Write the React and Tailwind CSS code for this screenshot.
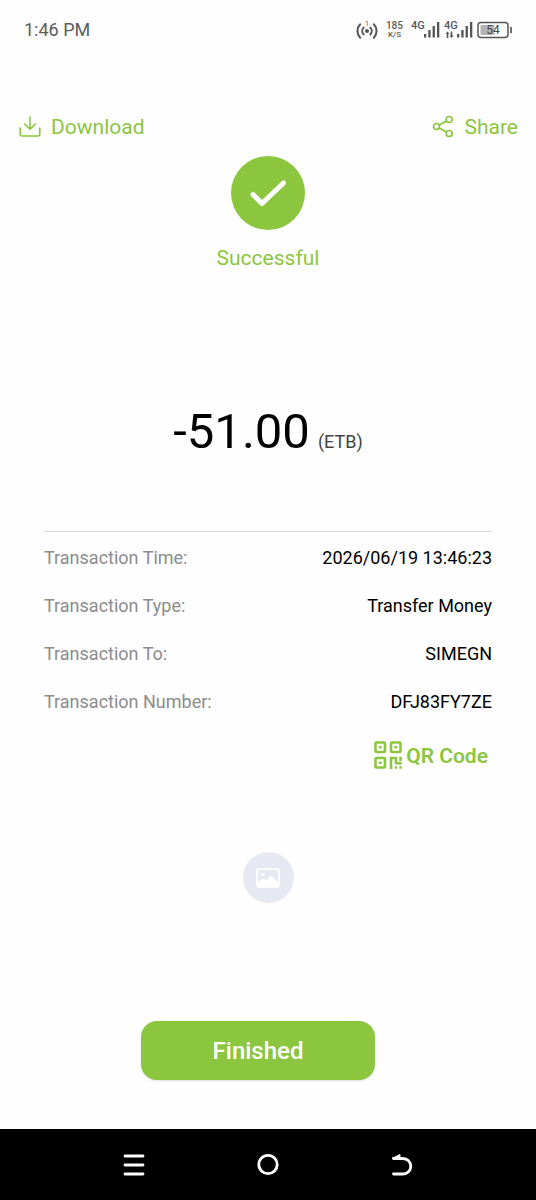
import React from 'react';

const details = [
  { label: 'Transaction Time:', value: '2026/06/19 13:46:23' },
  { label: 'Transaction Type:', value: 'Transfer Money' },
  { label: 'Transaction To:', value: 'SIMEGN' },
  { label: 'Transaction Number:', value: 'DFJ83FY7ZE' },
];

function HotspotIcon() {
  return (
    <svg width="22" height="20" viewBox="0 0 22 20" fill="none" stroke="#555" strokeWidth="2" strokeLinecap="round">
      <circle cx="11" cy="11" r="2" fill="#555" stroke="none" />
      <path d="M7.600 7.600a5 5 0 0 0 0 6.800M14.400 7.600a5 5 0 0 1 0 6.800" />
      <path d="M4.200 4.300a9.500 9.500 0 0 0 0 13.400M17.800 4.300a9.500 9.500 0 0 1 0 13.400" />
      <text x="11" y="6" fontSize="7" textAnchor="middle" fill="#555" stroke="none">1</text>
    </svg>
  );
}

function SignalIcon({ arrows = false }) {
  return (
    <svg width="29" height="20" viewBox="0 0 29 20" fill="#555">
      <text x="0" y="9" fontSize="11" fontWeight="500">4G</text>
      <path d="M13 14h2.300v3.500H13zM17.300 10h2.300v7.500h-2.300zM21.600 6h2.300v11.500h-2.300zM26 2h2.300v15.500H26z" />
      {arrows && (
        <path d="M2.700 18v-4H1.500l2-2.500 2 2.500H4.300v4zM6.700 11.500v4H5.500l2 2.500 2-2.500H8.300v-4z" />
      )}
    </svg>
  );
}

function BatteryIcon() {
  return (
    <svg width="35" height="18" viewBox="0 0 35 18" fill="none">
      <rect x="1" y="1.500" width="30" height="15" rx="3" stroke="#555" strokeWidth="1.500" />
      <rect x="3.500" y="4" width="14" height="10" rx="1" fill="#b4b4b4" />
      <path d="M34 6.500v5" stroke="#555" strokeWidth="1.700" strokeLinecap="round" />
      <text x="16" y="13.300" fontSize="12" textAnchor="middle" fill="#444">54</text>
    </svg>
  );
}

function StatusBar() {
  return (
    <div className="flex h-15 items-center justify-between px-6 text-[#5c5c5c]">
      <span className="text-lg">1:46 PM</span>
      <div className="flex items-center">
        <HotspotIcon />
        <div className="mx-2 flex flex-col items-center font-medium">
          <span className="text-[10px] leading-[10px]">185</span>
          <span className="text-[8px] leading-[8px]">K/S</span>
        </div>
        <div className="flex items-center gap-1">
          <SignalIcon />
          <SignalIcon arrows />
          <BatteryIcon />
        </div>
      </div>
    </div>
  );
}

function DownloadIcon() {
  return (
    <svg width="22" height="22" viewBox="0 0 22 22" fill="none" stroke="currentColor" strokeWidth="1.600" strokeLinecap="round" strokeLinejoin="round">
      <path d="M11 1v12M5.500 8l5.500 5.200L16.500 8" />
      <path d="M1.200 12v6a2 2 0 0 0 2 2h15.600a2 2 0 0 0 2-2v-6" />
    </svg>
  );
}

function ShareIcon() {
  return (
    <svg width="22" height="22" viewBox="0 0 22 22" fill="none" stroke="currentColor" strokeWidth="1.700">
      <circle cx="4.500" cy="10.500" r="3" />
      <circle cx="17.200" cy="3.500" r="3" />
      <circle cx="17.200" cy="17.500" r="3" />
      <path d="M7.200 9.100l7.300-4.100M7.200 11.900l7.300 4.100" />
    </svg>
  );
}

function QrIcon() {
  return (
    <svg width="28" height="28" viewBox="0 0 28 28" fill="none" stroke="currentColor" strokeWidth="2.600">
      <rect x="1.500" y="1.500" width="9.500" height="9.500" rx="1" />
      <rect x="17" y="1.500" width="9.500" height="9.500" rx="1" />
      <rect x="1.500" y="17" width="9.500" height="9.500" rx="1" />
      <path d="M4.900 6.250h2.700M20.400 6.250h2.700M4.900 21.750h2.700" />
      <path d="M17 28V17h5v5.200h5.800M26.500 20v-4.300" />
      <path d="M20.700 26.500h2.500M25.300 26.500h2.500" />
    </svg>
  );
}

function PictureIcon() {
  return (
    <svg width="24" height="20" viewBox="0 0 24 20" fill="none">
      <rect x="1.200" y="1.200" width="21.600" height="17.600" rx="1" stroke="#fff" strokeWidth="1.800" />
      <circle cx="7" cy="6.500" r="1.800" fill="#fff" />
      <path d="M2 14.500L7.500 10l3 2.500L15 7.500l7 6.500v5H2z" fill="#fff" />
    </svg>
  );
}

export default function App() {
  return (
    <div className="flex min-h-screen flex-col bg-[#fefefe] font-['Roboto',sans-serif] text-black">
      <StatusBar />

      <main className="flex flex-1 flex-col items-center">
        <div className="mt-13 flex w-full items-center justify-between px-[18px] pt-px text-[#8cc63f]">
          <button type="button" className="flex items-center gap-2.5 pl-px text-[21px] leading-7">
            <DownloadIcon />
            Download
          </button>
          <button type="button" className="flex items-center gap-2.5 text-[21px] leading-7">
            <ShareIcon />
            Share
          </button>
        </div>

        <div className="mt-[15px] flex size-[74px] items-center justify-center rounded-full bg-[#8cc63f]">
          <svg width="38" height="28" viewBox="0 0 38 28" fill="none" stroke="#fff" strokeWidth="5" strokeLinecap="round" strokeLinejoin="round">
            <path d="M4 15.500l9 9L34.500 4" />
          </svg>
        </div>
        <p className="mt-3.5 text-[21px] leading-7 text-[#8cc63f]">Successful</p>

        <div className="mt-33 flex items-baseline gap-2">
          <span className="text-[49px] leading-14">-51.00</span>
          <span className="text-lg text-[#444]">(ETB)</span>
        </div>

        <section className="mt-[71px] w-full px-11">
          <dl className="border-t border-[#d9d9d9] pt-0.5">
            {details.map((item) => (
              <div key={item.label} className="flex h-12 items-center justify-between text-lg">
                <dt className="text-[#8c8c8c]">{item.label}</dt>
                <dd>{item.value}</dd>
              </div>
            ))}
          </dl>
          <div className="flex justify-end">
            <button type="button" className="mt-3.5 mr-1 flex items-center gap-1 text-[21px] leading-7 font-semibold text-[#8cc63f]">
              <QrIcon />
              <span className="pt-0.5">QR Code</span>
            </button>
          </div>
        </section>

        <div className="mt-[82px] flex size-[51px] items-center justify-center rounded-full bg-[#e6e9f2]">
          <PictureIcon />
        </div>

        <button
          type="button"
          className="mt-[118px] mr-5 mb-12 h-[59px] w-[234px] rounded-2xl bg-[#8cc63f] text-2xl font-medium text-white shadow-sm"
        >
          Finished
        </button>
      </main>

      <nav className="grid h-[71px] grid-cols-3 items-center justify-items-center bg-black px-[12.5%] text-white">
        <button type="button" aria-label="Recent apps">
          <svg width="22" height="24" viewBox="0 0 22 24" fill="none" stroke="currentColor" strokeWidth="2.800" strokeLinecap="round">
            <path d="M2 3h18M2 12h18M2 21h18" />
          </svg>
        </button>
        <button type="button" aria-label="Home">
          <svg width="24" height="24" viewBox="0 0 24 24" fill="none" stroke="currentColor" strokeWidth="2.800">
            <circle cx="12" cy="11.500" r="9.200" />
          </svg>
        </button>
        <button type="button" aria-label="Back">
          <svg width="22" height="24" viewBox="0 0 22 24" fill="none" stroke="currentColor" strokeWidth="2.800" strokeLinecap="round">
            <path d="M2.500 5.500H12a7.750 7.750 0 0 1 0 15.500H2.500" />
            <path d="M2 5l7-3.500v4z" fill="currentColor" strokeWidth="1" />
          </svg>
        </button>
      </nav>
    </div>
  );
}
